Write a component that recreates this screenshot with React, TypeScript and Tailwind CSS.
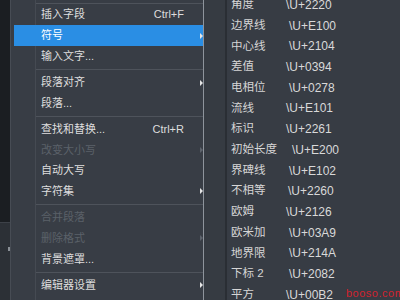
import React from "react";

type Item =
  | { kind: "sep" }
  | { kind: "item"; label: string; shortcut?: string; arrow?: boolean; disabled?: boolean; active?: boolean };

const mainItems: Item[] = [
  { kind: "item", label: "插入字段", shortcut: "Ctrl+F" },
  { kind: "item", label: "符号", arrow: true, active: true },
  { kind: "item", label: "输入文字..." },
  { kind: "sep" },
  { kind: "item", label: "段落对齐", arrow: true },
  { kind: "item", label: "段落..." },
  { kind: "sep" },
  { kind: "item", label: "查找和替换...", shortcut: "Ctrl+R" },
  { kind: "item", label: "改变大小写", arrow: true, disabled: true },
  { kind: "item", label: "自动大写" },
  { kind: "item", label: "字符集", arrow: true },
  { kind: "sep" },
  { kind: "item", label: "合并段落", disabled: true },
  { kind: "item", label: "删除格式", arrow: true, disabled: true },
  { kind: "item", label: "背景遮罩..." },
  { kind: "sep" },
  { kind: "item", label: "编辑器设置", arrow: true },
];

const subItems: { name: string; code: string; pad: string }[] = [
  { name: "角度", code: "\\U+2220", pad: "pl-[0px]" },
  { name: "边界线", code: "\\U+E100", pad: "pl-[3px]" },
  { name: "中心线", code: "\\U+2104", pad: "pl-[3px]" },
  { name: "差值", code: "\\U+0394", pad: "pl-[0px]" },
  { name: "电相位", code: "\\U+0278", pad: "pl-[3px]" },
  { name: "流线", code: "\\U+E101", pad: "pl-[0px]" },
  { name: "标识", code: "\\U+2261", pad: "pl-[0px]" },
  { name: "初始长度", code: "\\U+E200", pad: "pl-[6px]" },
  { name: "界碑线", code: "\\U+E102", pad: "pl-[3px]" },
  { name: "不相等", code: "\\U+2260", pad: "pl-[2px]" },
  { name: "欧姆", code: "\\U+2126", pad: "pl-[0px]" },
  { name: "欧米加", code: "\\U+03A9", pad: "pl-[3px]" },
  { name: "地界限", code: "\\U+214A", pad: "pl-[3px]" },
  { name: "下标 2", code: "\\U+2082", pad: "pl-[3px]" },
  { name: "平方", code: "\\U+00B2", pad: "pl-[0px]" },
];

function Arrow({ dim }: { dim?: boolean }) {
  return (
    <span
      className={
        "w-0 h-0 border-y-[3px] border-y-transparent border-l-[3px] " +
        (dim ? "border-l-[#5d636c]" : "border-l-[#e6e6e6]")
      }
    />
  );
}

function MainRow({ item }: { item: Item }) {
  if (item.kind === "sep") {
    return (
      <div className="flex h-[5.5px]">
        <div className="w-[24px] shrink-0" />
        <div className="w-px bg-[#454a52]" />
        <div className="flex-1 flex items-center">
          <div className="w-full h-px bg-[#4e535b]" />
        </div>
      </div>
    );
  }
  const textColor = item.disabled ? "text-[#5b6169]" : item.active ? "text-white" : "text-[#dedede]";
  return (
    <div className="flex h-[20.7px] pl-[3px]">
      <div className={"flex-1 flex items-center " + (item.active ? "bg-[#2a8ee4]" : "")}>
        <div className="w-[21px] shrink-0 self-stretch" />
        <div className={"w-px self-stretch " + (item.active ? "bg-transparent" : "bg-[#454a52]")} />
        <span className={"pl-[5px] flex-1 whitespace-nowrap " + textColor}>{item.label}</span>
        {item.shortcut && <span className="pr-[19px] text-[#dedede]">{item.shortcut}</span>}
        {item.arrow && <Arrow dim={item.disabled} />}
      </div>
    </div>
  );
}

export default function App() {
  return (
    <div
      className="relative w-[400px] h-[300px] overflow-hidden flex bg-[#1d2025] text-[11px] leading-none"
      style={{ fontFamily: '"Liberation Sans", "Noto Sans CJK SC", sans-serif' }}
    >
      {/* left strip */}
      <div className="w-[11px] shrink-0 flex flex-col border-r border-[#474c54]">
        <div className="h-[222px] bg-[#1b1e22]" />
        <div className="flex-1 bg-[#2c3036] border-t border-[#3d4148] flex flex-col items-end">
          <div className="mt-[24px] w-[2px] h-[4px] bg-[#8a8f96]" />
        </div>
      </div>

      {/* main menu */}
      <div className="w-[193px] shrink-0 bg-[#383d45] border-r border-[#8e949c] flex flex-col">
        <div className="flex h-[4.6px]">
          <div className="w-[24px] shrink-0" />
          <div className="w-px bg-[#454a52]" />
          <div className="flex-1 flex items-end pb-[1px]">
            <div className="w-full h-px bg-[#4e535b]" />
          </div>
        </div>
        {mainItems.map((it, i) => (
          <MainRow key={i} item={it} />
        ))}
        <div className="flex flex-1">
          <div className="w-[24px] shrink-0" />
          <div className="w-px bg-[#454a52]" />
        </div>
      </div>

      {/* gap */}
      <div className="w-[23px] shrink-0 bg-[#363b42] border-r-2 border-[#2a2e34]" />

      {/* submenu */}
      <div className="flex-1 bg-[#373c44] flex flex-col pl-[4px] text-[11.5px]">
        <div className="mt-[-5.35px] flex flex-col">
          {subItems.map((s, i) => (
            <div key={i} className="h-[20.7px] flex items-center whitespace-nowrap">
              <span className="w-[55px] shrink-0 text-[#d6d6d6]">{s.name}</span>
              <span className={"text-[12px] text-[#d9d9d9] " + s.pad}>{s.code}</span>
            </div>
          ))}
        </div>
      </div>

      <div className="absolute left-[346px] top-[288px] text-[11px] text-[#d2232f] tracking-[0.5px]">
        booso.com
      </div>
    </div>
  );
}
